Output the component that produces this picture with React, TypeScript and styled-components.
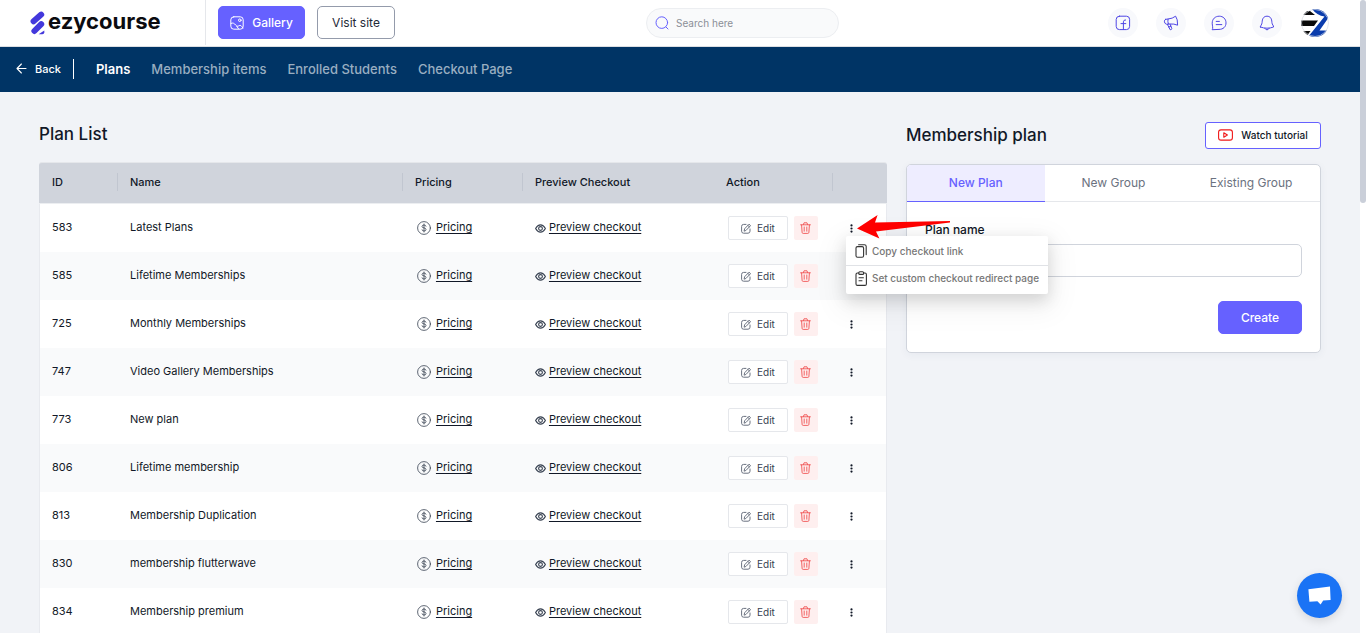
import React from "react";
import styled, { createGlobalStyle, css } from "styled-components";

const GlobalStyle = createGlobalStyle`
  *, *::before, *::after { box-sizing: border-box; }
  body { margin: 0; background: #f1f3f7; color: #111827; font-family: Inter, "Liberation Sans", sans-serif; font-size: 11px; }
  button, input { font-family: inherit; }
  button { cursor: pointer; }
  svg { display: block; flex: none; }
  h1, h2, p { margin: 0; }
`;

const stroke = {
  fill: "none",
  stroke: "currentColor",
  strokeLinecap: "round" as const,
  strokeLinejoin: "round" as const,
};

/* ---------- shell ---------- */

const Shell = styled.div`
  display: flex;
  height: 100vh;
`;

const Page = styled.div`
  flex: 1;
  min-width: 0;
  overflow-x: hidden;
  overflow-y: auto;
  scrollbar-width: none;
`;

const ScrollRail = styled.div`
  flex: none;
  width: 6px;
  background: #fff;
`;

const ScrollThumb = styled.div`
  height: 32%;
  border-radius: 3px;
  background: #cacfd9;
`;

/* ---------- top bar ---------- */

const TopBar = styled.header`
  display: flex;
  align-items: center;
  height: 47px;
  padding: 0 30px 1px 0;
  background: #fff;
  border-bottom: 1px solid #dcdfe3;
`;

const Brand = styled.a`
  display: flex;
  align-items: center;
  align-self: stretch;
  gap: 3px;
  width: 206px;
  padding-left: 30px;
  border-right: 1px solid #e5e7eb;
  color: #0b0b0f;
  text-decoration: none;
`;

const BrandName = styled.span`
  padding-bottom: 3px;
  font-size: 22px;
  line-height: 26px;
  font-weight: 700;
`;

const TopButtons = styled.div`
  display: flex;
  gap: 12px;
  padding-left: 12px;
`;

const Button = styled.button<{ $outline?: boolean; $width: number }>`
  display: flex;
  align-items: center;
  justify-content: center;
  gap: 8px;
  width: ${(p) => p.$width}px;
  height: 33px;
  padding: 0;
  border: 1px solid ${(p) => (p.$outline ? "#949bab" : "#6661ff")};
  border-radius: 5px;
  background: ${(p) => (p.$outline ? "#fff" : "#6661ff")};
  color: ${(p) => (p.$outline ? "#1f2937" : "#fff")};
  font-size: 12px;
  line-height: 16px;
  font-weight: ${(p) => (p.$outline ? 400 : 500)};
`;

const Search = styled.label`
  display: flex;
  align-items: center;
  gap: 7px;
  width: 193px;
  height: 30px;
  margin: 0 auto;
  padding: 0 8px;
  border: 1px solid #eceef1;
  border-radius: 16px;
  background: #f9fafb;
  color: #6661ff;
`;

const SearchInput = styled.input`
  flex: 1;
  min-width: 0;
  padding: 0;
  border: 0;
  outline: 0;
  background: transparent;
  color: #374151;
  font-size: 10px;
  &::placeholder { color: #8b8f97; }
`;

const Actions = styled.div`
  display: flex;
  align-items: center;
  gap: 18px;
  padding-left: 18px;
`;

const RoundButton = styled.button`
  display: flex;
  align-items: center;
  justify-content: center;
  width: 30px;
  height: 30px;
  padding: 0;
  border: 0;
  border-radius: 50%;
  background: #f8f9fc;
  color: #4f46e5;
`;

const AvatarButton = styled(RoundButton)`
  background: transparent;
`;

/* ---------- section navigation ---------- */

const SectionNav = styled.nav`
  display: flex;
  align-items: center;
  height: 45px;
  padding: 0 16px 2px;
  background: #003465;
`;

const Back = styled.a`
  display: flex;
  align-items: center;
  gap: 8px;
  height: 20px;
  padding-right: 12px;
  border-right: 1px solid #fff;
  color: #fff;
  font-size: 11px;
  font-weight: 500;
  text-decoration: none;
`;

const NavLinks = styled.div`
  display: flex;
  gap: 21px;
  padding-left: 22px;
`;

const NavLink = styled.a<{ $active?: boolean }>`
  color: ${(p) => (p.$active ? "#fff" : "#99aec1")};
  font-size: 13px;
  line-height: 20px;
  font-weight: ${(p) => (p.$active ? 600 : 500)};
  text-decoration: none;
`;

/* ---------- main ---------- */

const Main = styled.main`
  display: grid;
  grid-template-columns: minmax(0, 2.043fr) minmax(0, 1fr);
  align-items: start;
  gap: 19px;
  padding: 30px 39px 40px;
`;

const ListSection = styled.section`
  position: relative;
  z-index: 1;
`;

const Heading = styled.h1`
  font-size: 17px;
  line-height: 24px;
  font-weight: 500;
`;

const ListHeading = styled(Heading)`
  margin-bottom: 16px;
`;

const PlanTable = styled.table`
  width: 100%;
  table-layout: fixed;
  border-collapse: separate;
  border-spacing: 0;
`;

const HeadCell = styled.th<{ $width?: number; $divider?: boolean }>`
  position: relative;
  ${(p) => p.$width && css`width: ${p.$width}px;`}
  height: 42px;
  padding: 0 12px 2px;
  border-top: 1px solid #e5e7eb;
  border-bottom: 1px solid #eceef1;
  background: #d0d4dc;
  font-size: 11px;
  line-height: 16px;
  font-weight: 500;
  text-align: left;
  &:first-child { border-top-left-radius: 3px; padding-left: 13px; }
  &:last-child { border-top-right-radius: 3px; }
  ${(p) =>
    p.$divider &&
    css`
      &::after {
        content: "";
        position: absolute;
        top: 10px;
        bottom: 12px;
        right: 0;
        width: 1px;
        background: #c1c6d0;
      }
    `}
`;

const Row = styled.tr`
  background: #fff;
  &:nth-child(even) { background: #f9fafb; }
`;

const Cell = styled.td`
  height: 48px;
  padding: 0 12px;
  font-size: 11px;
  line-height: 16px;
  white-space: nowrap;
  &:first-child { border-left: 1px solid #e8eaef; }
  &:last-child { border-right: 1px solid #e8eaef; }
`;

const TextCell = styled(Cell)`
  padding-bottom: 2px;
`;

const IconLink = styled.a<{ $gap: number; $indent?: number }>`
  display: flex;
  align-items: center;
  gap: ${(p) => p.$gap}px;
  padding-left: ${(p) => p.$indent ?? 0}px;
  color: #111827;
  text-decoration: none;
  svg { color: #374151; }
`;

const LinkText = styled.span`
  padding-bottom: 2px;
  text-decoration: underline;
  text-underline-offset: 2px;
`;

const ActionGroup = styled.div`
  display: flex;
  gap: 6px;
  padding-left: 2px;
`;

const EditButton = styled.button`
  display: flex;
  align-items: center;
  justify-content: center;
  gap: 6px;
  width: 60px;
  height: 24px;
  padding: 0;
  border: 1px solid #e5e7eb;
  border-radius: 2px;
  background: #fff;
  color: #374151;
  font-size: 10px;
  line-height: 14px;
  svg { color: #6b7280; }
`;

const DeleteButton = styled.button`
  display: flex;
  align-items: center;
  justify-content: center;
  width: 24px;
  height: 24px;
  padding: 0;
  border: 0;
  border-radius: 2px;
  background: #feefef;
  color: #f05252;
`;

const MoreWrap = styled.div`
  position: relative;
  width: 14px;
`;

const MoreButton = styled.button`
  display: flex;
  align-items: center;
  justify-content: center;
  width: 14px;
  height: 16px;
  padding: 0;
  border: 0;
  background: transparent;
  color: #111827;
`;

const Menu = styled.div`
  position: absolute;
  top: 100%;
  left: 1px;
  z-index: 1;
  width: 202px;
  border-radius: 2px;
  background: #fff;
  box-shadow: 0 6px 16px rgba(0, 0, 0, 0.14), 0 9px 28px 8px rgba(0, 0, 0, 0.05);
`;

const MenuItem = styled.button`
  display: flex;
  align-items: center;
  gap: 4px;
  width: 100%;
  height: 29px;
  padding: 0 0 0 9px;
  border: 0;
  background: transparent;
  color: #777;
  font-size: 10px;
  line-height: 16px;
  font-weight: 500;
  white-space: nowrap;
  & + & { border-top: 1px solid #e0e2e6; padding-bottom: 4px; }
  svg { color: #333; }
`;

const Pointer = styled.svg`
  position: absolute;
  top: -5px;
  left: 12px;
  z-index: 2;
  pointer-events: none;
`;

/* ---------- membership form ---------- */

const FormHead = styled.div`
  display: flex;
  align-items: center;
  justify-content: space-between;
  margin-bottom: 15px;
`;

const FormHeading = styled(Heading)`
  padding-bottom: 2px;
`;

const TutorialButton = styled.button`
  display: flex;
  align-items: center;
  justify-content: center;
  gap: 8px;
  width: 116px;
  height: 27px;
  padding: 0 0 1px;
  border: 1px solid #6661ff;
  border-radius: 3px;
  background: #fff;
  color: #111827;
  font-size: 10px;
  line-height: 14px;
  font-weight: 500;
`;

const Card = styled.form`
  border: 1px solid #d0d4dc;
  border-radius: 5px;
  background: #fff;
  box-shadow: 0 2px 8px rgba(30, 50, 100, 0.05);
`;

const Tabs = styled.div`
  display: grid;
  grid-template-columns: repeat(3, 1fr);
`;

const Tab = styled.button<{ $active?: boolean }>`
  height: 37px;
  padding: 0;
  border: 0;
  border-bottom: 1px solid ${(p) => (p.$active ? "#6661ff" : "#e5e7eb")};
  border-top-left-radius: ${(p) => (p.$active ? 4 : 0)}px;
  background: ${(p) => (p.$active ? "#eeedff" : "transparent")};
  color: ${(p) => (p.$active ? "#6661ff" : "#6b7280")};
  font-size: 12px;
  line-height: 16px;
  font-weight: ${(p) => (p.$active ? 500 : 400)};
`;

const FormBody = styled.div`
  display: flex;
  flex-direction: column;
  padding: 20px 18px 18px;
`;

const Label = styled.label`
  margin-bottom: 6px;
  font-size: 12px;
  line-height: 16px;
  font-weight: 500;
`;

const TextInput = styled.input`
  width: 100%;
  height: 33px;
  margin-bottom: 24px;
  padding: 0 12px;
  border: 1px solid #d0d4dc;
  border-radius: 5px;
  background: #fff;
  font-size: 12px;
`;

const FormFoot = styled.div`
  display: flex;
  justify-content: flex-end;
`;

const ChatButton = styled.button`
  position: fixed;
  right: 24px;
  bottom: 15px;
  z-index: 5;
  display: flex;
  align-items: center;
  justify-content: center;
  width: 45px;
  height: 45px;
  padding: 0;
  border: 0;
  border-radius: 50%;
  background: #1a73f5;
  box-shadow: 0 3px 10px rgba(0, 0, 0, 0.12);
`;

/* ---------- icons ---------- */

const LogoMark = () => (
  <svg width="15" height="24" viewBox="0 0 15 24" stroke="#4338dc" strokeWidth="6" strokeLinecap="round" fill="none">
    <path d="M3.6 10.2 L11.2 3.6" />
    <path d="M4.4 20 L11.2 13.2" />
    <path d="M8.6 23.2 L14.3 19.4 V21.4 Q14.2 23.2 12.4 23.2 Z" stroke="none" fill="#4338dc" />
  </svg>
);

const GalleryIcon = () => (
  <svg width="14" height="14" viewBox="0 0 14 14" {...stroke}>
    <rect x="0.8" y="0.8" width="12.4" height="12.4" rx="3" />
    <circle cx="9.8" cy="4.2" r="1.3" />
    <path d="M1 7.4 C3 6.4 4.4 7.4 5.6 9 S8 10.4 9.2 9.6 S11.8 10 13 12 M6.6 10 L8.4 12.6" />
  </svg>
);

const SearchIcon = () => (
  <svg width="14" height="14" viewBox="0 0 14 14" {...stroke}>
    <circle cx="6.8" cy="6.6" r="5.8" />
    <path d="M11 11 L13 13" />
  </svg>
);

const FacebookIcon = () => (
  <svg width="16" height="16" viewBox="0 0 16 16" {...stroke}>
    <rect x="1.2" y="1.2" width="13.4" height="13.4" rx="3.2" />
    <path d="M8.4 14.4 V6.8 Q8.4 4.8 10.6 4.9 M6 8.6 H10.8" />
  </svg>
);

const MegaphoneIcon = () => (
  <svg width="16" height="16" viewBox="0 0 16 16" {...stroke}>
    <path d="M2.4 4.4 L5 4 Q9.6 3.6 12.6 1.2 Q14.8 4 14.6 10.2 Q11 8.6 6.6 9 L3.4 9.2 Q1.8 8.8 1.4 6.8 Q1.3 4.8 2.4 4.4 Z" />
    <path d="M5 4.2 Q4.4 6.6 5.4 9 M4.4 9.4 L7.2 14.8 Q8.8 14.8 8.8 13.4 L7 9.2 M5.8 12 L8 11.2" />
  </svg>
);

const ChatIcon = () => (
  <svg width="16" height="16" viewBox="0 0 16 16" {...stroke}>
    <path d="M1.4 14.4 C2.4 13 1.2 10.8 1.2 8.2 C1.2 4 4.2 1.2 8.2 1.2 C12.2 1.2 15 4 15 7.9 C15 11.8 12.2 14.4 8.4 14.4 Z" />
    <path d="M5.2 6.4 H8.4 M5.2 9.6 H10.8" />
  </svg>
);

const BellIcon = () => (
  <svg width="16" height="16" viewBox="0 0 16 16" {...stroke}>
    <path d="M1.4 12 C1.2 10.6 3 9.8 3.1 7.4 C3.2 3.8 4.6 1.2 8 1.2 S12.8 3.8 12.9 7.4 C13 9.8 14.8 10.6 14.6 12 Q11.4 13.2 8 13.2 T1.4 12 Z" />
    <path d="M5.8 13.4 Q8 16.6 10.2 13.4" />
  </svg>
);

const Avatar = () => (
  <svg width="28" height="28" viewBox="0 0 28 28">
    <defs>
      <clipPath id="avatar-circle">
        <circle cx="14" cy="14" r="14" />
      </clipPath>
    </defs>
    <g clipPath="url(#avatar-circle)">
      <rect width="28" height="28" fill="#fff" />
      <path d="M4 2 H9 L14 6 H1 Z M0 11.5 H17 L13 17 H0 Z M1 22 H9.5 L6.5 26 H2 Z" fill="#0a0a0a" />
      <path d="M11 0 H22 L28 8 L18.5 21.5 H26 L22 28 H7 L23.5 7.4 Q16 6.6 11 0 Z" fill="#0a3cad" />
    </g>
    <circle cx="14" cy="14" r="13.5" fill="none" stroke="#d9dde5" strokeWidth="0.7" />
  </svg>
);

const BackArrow = () => (
  <svg width="11" height="11" viewBox="0 0 11 11" {...stroke} strokeWidth="1.1">
    <path d="M10 5.5 H1 M5.4 1 L1 5.5 L5.4 10" />
  </svg>
);

const DollarIcon = () => (
  <svg width="14" height="14" viewBox="0 0 14 14" {...stroke} strokeWidth="0.8">
    <circle cx="7" cy="7" r="6.4" />
    <path d="M9 5.2 Q8.8 4 7 4 T5 5.4 Q5 6.7 7 6.9 T9 8.6 Q9 10 7 10 T5 8.8 M7 3 V11" />
  </svg>
);

const EyeIcon = () => (
  <svg width="11" height="9" viewBox="0 0 11 9" {...stroke} strokeWidth="1.1">
    <path d="M0.6 4.5 C2 2 3.6 0.9 5.5 0.9 S9 2 10.4 4.5 C9 7 7.4 8.1 5.5 8.1 S2 7 0.6 4.5 Z" />
    <circle cx="5.5" cy="4.5" r="1.9" />
  </svg>
);

const EditIcon = () => (
  <svg width="10" height="11" viewBox="0 0 10 11" {...stroke}>
    <path d="M5 1.4 H2.6 Q0.6 1.4 0.6 3.4 V8.2 Q0.6 10.2 2.6 10.2 H7 Q9 10.2 9 8.2 V6" />
    <path d="M3.2 7.8 L3.6 5.8 L8 1.2 L9.6 2.6 L5.2 7.2 Z M6.8 2.4 L8.4 3.8" />
  </svg>
);

const TrashIcon = () => (
  <svg width="11" height="12" viewBox="0 0 11 12" {...stroke} strokeWidth="0.9">
    <path d="M0.6 2.8 H10.4 M3.4 2.6 L4 0.8 H7 L7.6 2.6 M1.6 3 L2.1 10.4 Q2.2 11.4 3.2 11.4 H7.8 Q8.8 11.4 8.9 10.4 L9.4 3 M4.2 5 V9.2 M6.8 5 V9.2" />
  </svg>
);

const DotsIcon = () => (
  <svg width="3" height="9" viewBox="0 0 3 9" fill="currentColor">
    <circle cx="1.5" cy="1.4" r="1.1" />
    <circle cx="1.5" cy="4.5" r="1.1" />
    <circle cx="1.5" cy="7.6" r="1.1" />
  </svg>
);

const CopyIcon = () => (
  <svg width="13" height="14" viewBox="0 0 13 14" {...stroke} strokeWidth="1.1">
    <rect x="1" y="2.6" width="7.6" height="10.6" rx="1.5" />
    <path d="M3.6 0.8 H9.4 Q11.2 0.8 11.2 2.6 V10.6" />
  </svg>
);

const ClipboardIcon = () => (
  <svg width="13" height="15" viewBox="0 0 13 15" {...stroke} strokeWidth="1.1">
    <path d="M3.6 2 H2.4 Q1 2 1 3.4 V13 Q1 14.4 2.4 14.4 H10 Q11.4 14.4 11.4 13 V3.4 Q11.4 2 10 2 H8.8" />
    <rect x="3.8" y="0.8" width="4.8" height="2.6" rx="1" />
    <path d="M4 6.8 H8.4 M4 9.8 H7" />
  </svg>
);

const VideoIcon = () => (
  <svg width="15" height="12" viewBox="0 0 15 12" {...stroke} stroke="#f01818" strokeWidth="1.1">
    <rect x="0.6" y="0.9" width="13.8" height="10.2" rx="2.4" />
    <path d="M5.8 3.8 L9.4 6 L5.8 8.2 Z" />
  </svg>
);

const SpeechIcon = () => (
  <svg width="23" height="20" viewBox="0 0 23 20">
    <path d="M0.4 3.2 L22 0.6 L22.6 14 L15.2 14.6 L12.6 18.6 L9.4 15.2 L1.4 15.8 Z" fill="#fff" />
  </svg>
);

/* ---------- data ---------- */

const plans = [
  { id: 583, name: "Latest Plans" },
  { id: 585, name: "Lifetime Memberships" },
  { id: 725, name: "Monthly Memberships" },
  { id: 747, name: "Video Gallery Memberships" },
  { id: 773, name: "New plan" },
  { id: 806, name: "Lifetime membership" },
  { id: 813, name: "Membership Duplication" },
  { id: 830, name: "membership flutterwave" },
  { id: 834, name: "Membership premium" },
];

const openPlan = 583;

const PlanRow = ({ id, name }: { id: number; name: string }) => (
  <Row>
    <TextCell>{id}</TextCell>
    <TextCell>{name}</TextCell>
    <Cell>
      <IconLink href="#pricing" $gap={5} $indent={2}>
        <DollarIcon />
        <LinkText>Pricing</LinkText>
      </IconLink>
    </Cell>
    <Cell>
      <IconLink href="#preview" $gap={3}>
        <EyeIcon />
        <LinkText>Preview checkout</LinkText>
      </IconLink>
    </Cell>
    <Cell>
      <ActionGroup>
        <EditButton type="button">
          <EditIcon />
          Edit
        </EditButton>
        <DeleteButton type="button" aria-label={`Delete ${name}`}>
          <TrashIcon />
        </DeleteButton>
      </ActionGroup>
    </Cell>
    <Cell>
      <MoreWrap>
        <MoreButton type="button" aria-label={`More actions for ${name}`}>
          <DotsIcon />
        </MoreButton>
        {id === openPlan && (
          <>
            <Menu role="menu">
              <MenuItem type="button" role="menuitem">
                <CopyIcon />
                Copy checkout link
              </MenuItem>
              <MenuItem type="button" role="menuitem">
                <ClipboardIcon />
                Set custom checkout redirect page
              </MenuItem>
            </Menu>
            <Pointer width="94" height="24" viewBox="0 0 94 24" aria-hidden="true">
              <path d="M0 13.6 L20.6 0 L18 7.6 L93 6 L93 7.6 L19 16.6 L22.4 23.6 Z" fill="#fe0000" />
            </Pointer>
          </>
        )}
      </MoreWrap>
    </Cell>
  </Row>
);

export default function App() {
  return (
    <>
      <GlobalStyle />
      <Shell>
        <Page>
          <TopBar>
            <Brand href="#home">
              <LogoMark />
              <BrandName>ezycourse</BrandName>
            </Brand>
            <TopButtons>
              <Button type="button" $width={87}>
                <GalleryIcon />
                Gallery
              </Button>
              <Button type="button" $outline $width={78}>
                Visit site
              </Button>
            </TopButtons>
            <Search>
              <SearchIcon />
              <SearchInput type="search" placeholder="Search here" aria-label="Search" />
            </Search>
            <Actions>
              <RoundButton type="button" aria-label="Facebook">
                <FacebookIcon />
              </RoundButton>
              <RoundButton type="button" aria-label="Announcements">
                <MegaphoneIcon />
              </RoundButton>
              <RoundButton type="button" aria-label="Messages">
                <ChatIcon />
              </RoundButton>
              <RoundButton type="button" aria-label="Notifications">
                <BellIcon />
              </RoundButton>
              <AvatarButton type="button" aria-label="Account">
                <Avatar />
              </AvatarButton>
            </Actions>
          </TopBar>
          <SectionNav>
            <Back href="#back">
              <BackArrow />
              Back
            </Back>
            <NavLinks>
              <NavLink href="#plans" $active>
                Plans
              </NavLink>
              <NavLink href="#items">Membership items</NavLink>
              <NavLink href="#students">Enrolled Students</NavLink>
              <NavLink href="#checkout">Checkout Page</NavLink>
            </NavLinks>
          </SectionNav>
          <Main>
            <ListSection>
              <ListHeading>Plan List</ListHeading>
              <PlanTable>
                <thead>
                  <tr>
                    <HeadCell $width={79} $divider>ID</HeadCell>
                    <HeadCell $divider>Name</HeadCell>
                    <HeadCell $width={120} $divider>Pricing</HeadCell>
                    <HeadCell $width={191}>Preview Checkout</HeadCell>
                    <HeadCell $width={119} $divider>Action</HeadCell>
                    <HeadCell $width={54} aria-label="More" />
                  </tr>
                </thead>
                <tbody>
                  {plans.map((plan) => (
                    <PlanRow key={plan.id} {...plan} />
                  ))}
                </tbody>
              </PlanTable>
            </ListSection>
            <section>
              <FormHead>
                <FormHeading as="h2">Membership plan</FormHeading>
                <TutorialButton type="button">
                  <VideoIcon />
                  Watch tutorial
                </TutorialButton>
              </FormHead>
              <Card>
                <Tabs role="tablist">
                  <Tab type="button" role="tab" aria-selected $active>
                    New Plan
                  </Tab>
                  <Tab type="button" role="tab">New Group</Tab>
                  <Tab type="button" role="tab">Existing Group</Tab>
                </Tabs>
                <FormBody>
                  <Label htmlFor="plan-name">Plan name</Label>
                  <TextInput id="plan-name" type="text" />
                  <FormFoot>
                    <Button type="button" $width={84}>
                      Create
                    </Button>
                  </FormFoot>
                </FormBody>
              </Card>
            </section>
          </Main>
        </Page>
        <ScrollRail aria-hidden="true">
          <ScrollThumb />
        </ScrollRail>
      </Shell>
      <ChatButton type="button" aria-label="Open chat">
        <SpeechIcon />
      </ChatButton>
    </>
  );
}
